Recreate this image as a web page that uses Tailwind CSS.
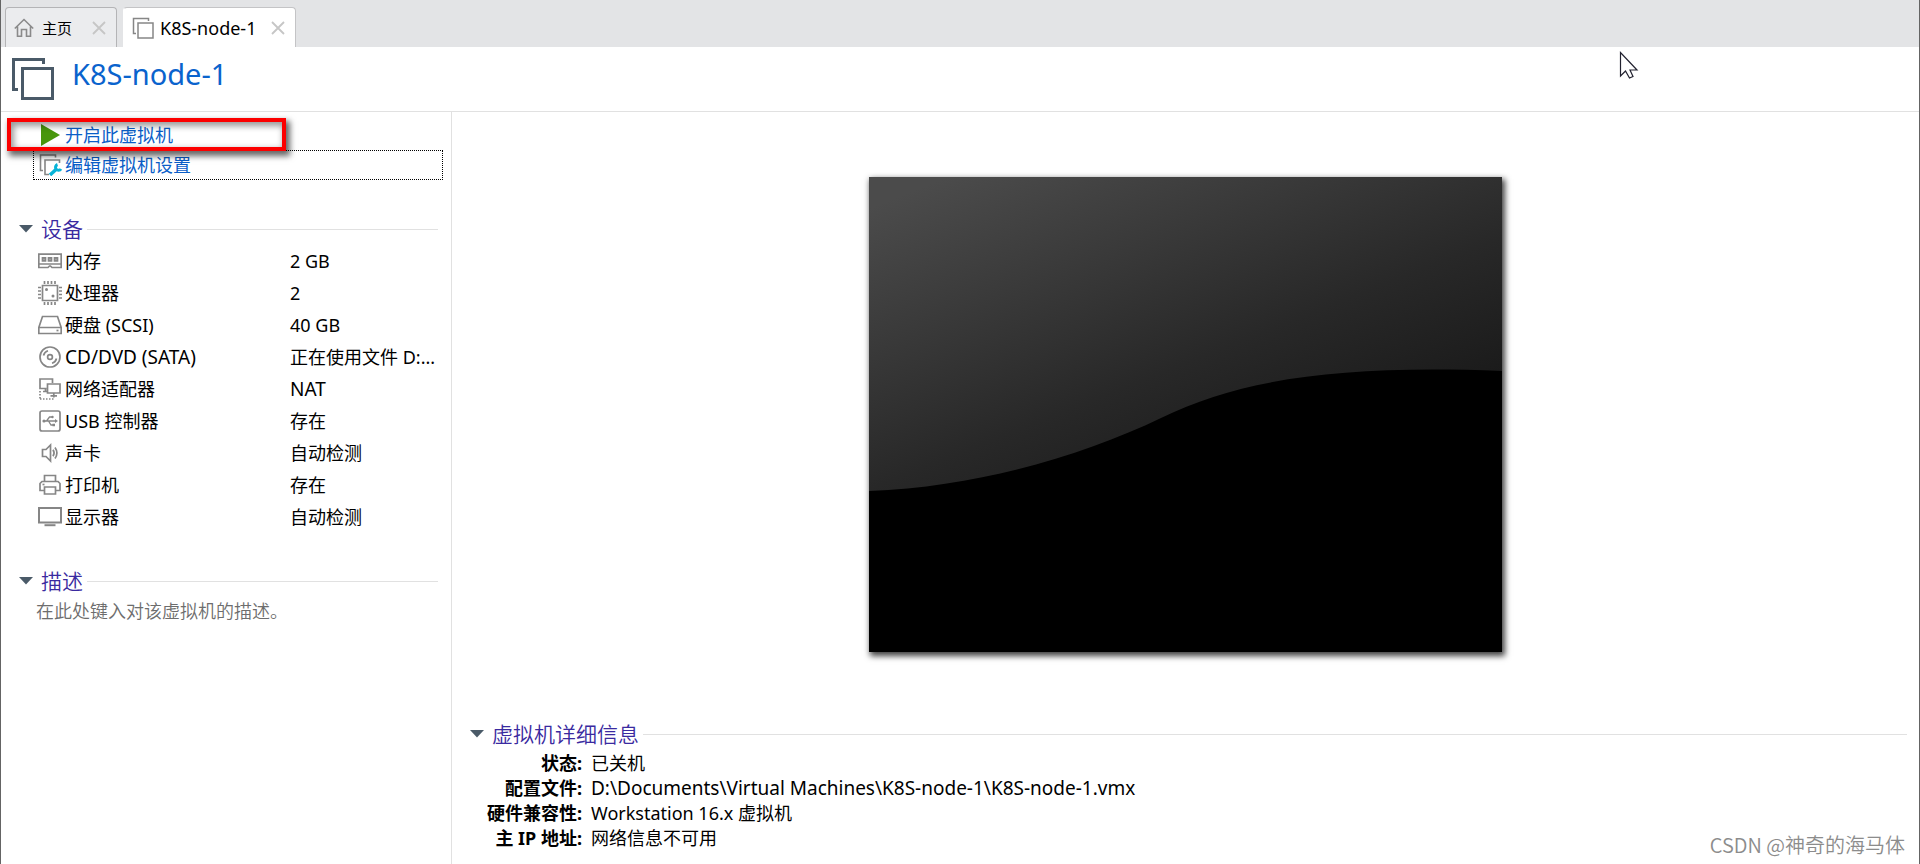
<!DOCTYPE html>
<html lang="zh-CN">
<head>
<meta charset="utf-8">
<title>K8S-node-1</title>
<script src="https://cdn.jsdelivr.net/npm/@tailwindcss/browser@4"></script>
</head>
<body class="font-['Noto_Sans','Noto_Sans_CJK_SC',sans-serif] text-lg leading-8 text-black bg-white">
<div class="relative flex flex-col min-h-screen border-x border-[#646464] bg-white">

  <!-- Tabs -->
  <nav class="flex items-end gap-1.5 h-[47px] pl-1 bg-[#e3e4e6] text-[15px] leading-5">
    <div class="flex items-center h-10 w-28 pl-2 pr-2.5 border border-b-0 border-[#b4b4b6] rounded-t bg-[#ebecee]">
      <button class="flex items-center gap-2">
        <svg class="size-5" viewBox="0 0 20 20" fill="none" stroke="#8a8a8a" stroke-width="1.600"><path d="M.8 10.500 10 1.500l9.200 9M3.500 8.500V18.200H7.500V11.500h5V18.200h4V8.500"/></svg>
        <span>主页</span>
      </button>
      <button class="ml-auto" aria-label="关闭主页"><svg class="size-3.5" viewBox="0 0 14 14" stroke="#c6c6c6" stroke-width="1.800"><path d="M1 1l12 12M13 1 1 13"/></svg></button>
    </div>
    <div class="flex items-center h-10 w-[173px] pl-2 pr-2.5 border border-b-0 border-l-white border-[#c4c4c6] rounded-t bg-white">
      <button class="flex items-center gap-1.5">
        <svg class="size-[22px]" viewBox="0 0 22 22" fill="none" stroke="#868686" stroke-width="1.500"><path d="M4 16.500H1.500V1.500H16.500V4M6 6h15v15H6z"/></svg>
        <span class="text-lg leading-5">K8S-node-1</span>
      </button>
      <button class="ml-auto" aria-label="关闭 K8S-node-1"><svg class="size-3.5" viewBox="0 0 14 14" stroke="#c6c6c6" stroke-width="1.800"><path d="M1 1l12 12M13 1 1 13"/></svg></button>
    </div>
  </nav>

  <!-- Title -->
  <header class="flex items-start gap-[18px] h-[65px] pt-[11px] pl-[11px] border-b border-[#e1e1e1]">
    <svg class="size-[42px]" viewBox="0 0 42 42" fill="none" stroke="#4a5a68" stroke-width="3"><path d="M6 31.500H1.500V1.500H31.500V6M10.500 10.500h30v30h-30z"/></svg>
    <h1 class="text-[29px] leading-8 text-[#0a63cd]">K8S-node-1</h1>
  </header>

  <div class="flex flex-1">
    <!-- Side panel -->
    <aside class="w-[451px] shrink-0 border-r border-[#e1e1e1] pr-2">
      <div class="relative flex flex-col pt-2 pl-8 text-[#0a5ec8]">
        <button class="flex items-center h-[30px] pl-2 gap-[5px]"><svg class="w-[19px] h-[22px]" viewBox="0 0 19 22"><path d="M0 0l19 11L0 22z" fill="#48960c"/></svg>开启此虚拟机</button>
        <button class="flex items-center h-[30px] pl-[5px] gap-0.5 border border-dotted border-black"><svg class="w-6 h-[22px]" viewBox="0 0 24 22" fill="none" stroke="#868686" stroke-width="1.600"><path d="M4 16.500H1.500V1H16.500V3.500M10 20.500H6V6H20.500V9"/><path d="M11 21l6.500-6" stroke="#06b4d8" stroke-width="3.500"/><path d="M18.500 10.500a3 3 0 1 0 3.500 4.500" stroke="#06b4d8" stroke-width="3"/></svg>编辑虚拟机设置</button>
        <!-- Highlight frame laid over the power-on entry -->
        <div class="absolute left-1.5 top-1.5 w-[279px] h-[33px] border-4 border-[#fc0000] pointer-events-none shadow-[3px_4px_6px_1px_rgba(0,0,0,.6),inset_2px_3px_6px_1px_rgba(0,0,0,.4)]"></div>
      </div>

      <section class="pt-[33px]">
        <h2><button class="flex items-center w-full h-8 pl-[18px] pr-[5px] text-[21px] font-[350] text-[#3a2aa0]"><svg class="w-3.5 h-2 mr-2" viewBox="0 0 14 8"><path d="M0 0h14L7 7.500z" fill="#4a5a68"/></svg>设备<span class="flex-1 h-px ml-1 bg-[#e1e1e1]"></span></button></h2>
        <table class="w-full table-fixed border-collapse">
          <colgroup><col class="w-16"><col class="w-[225px]"><col></colgroup>
          <tbody>
            <tr class="h-8"><td class="pl-[37px]"><svg class="size-6" viewBox="0 0 24 24" fill="none" stroke="#868686" stroke-width="1.700"><path d="M.8 5.200h22.400V18.500H14l-1.500-1.500h-1L10 18.500H.8zM.8 15H23"/><path d="M4.500 8.800h3v3h-3zM10.500 8.800h3v3h-3zM16.500 8.800h3v3h-3z" fill="#b0b0b0"/></svg></td><td>内存</td><td>2 GB</td></tr>
            <tr class="h-8"><td class="pl-[37px]"><svg class="size-6" viewBox="0 0 24 24" fill="none" stroke="#868686" stroke-width="1.700"><path d="M4.500 4.500h15v15h-15z"/><path d="M6.500 0v3M10 0v3M13.500 0v3M17 0v3M6.500 21v3M10 21v3M13.500 21v3M17 21v3M0 6.500h3M0 10h3M0 13.500h3M0 17h3M21 6.500h3M21 10h3M21 13.500h3M21 17h3"/><circle cx="8.500" cy="8.500" r="1.500" fill="#868686" stroke="none"/><circle cx="15" cy="15" r="1.500" fill="#868686" stroke="none"/></svg></td><td>处理器</td><td>2</td></tr>
            <tr class="h-8"><td class="pl-[37px]"><svg class="size-6" viewBox="0 0 24 24" fill="none" stroke="#868686" stroke-width="1.700"><path d="M.8 14.500 4.500 3.500h15l3.700 11v6H.8zM.8 14.500h22.400"/><path d="M18.500 17.500h2"/></svg></td><td>硬盘 (SCSI)</td><td>40 GB</td></tr>
            <tr class="h-8"><td class="pl-[37px]"><svg class="size-6" viewBox="0 0 24 24" fill="none" stroke="#868686" stroke-width="1.700"><circle cx="12" cy="12" r="10"/><circle cx="12" cy="12" r="2.400"/><path d="M5.500 10.500A6.500 6.500 0 0 1 10 5.800M18.500 13.500A6.500 6.500 0 0 1 14 18.200"/></svg></td><td class="text-[19px] leading-8">CD/DVD (SATA)</td><td class="truncate">正在使用文件 D:...</td></tr>
            <tr class="h-8"><td class="pl-[37px]"><svg class="size-6" viewBox="0 0 24 24" fill="none" stroke="#868686" stroke-width="1.700"><path d="M8.500 11.500H2V2h12.500v4M5 14.500h4.500M7.500 11.500v3M9.500 7h12.500v9H9.500zM15.800 16v3M12.500 18.800h6.500"/><path d="M2 14v8M2 22h14M15.800 19v3" stroke-dasharray="1.500 1.500"/></svg></td><td>网络适配器</td><td class="text-[19px] leading-8">NAT</td></tr>
            <tr class="h-8"><td class="pl-[37px]"><svg class="size-6" viewBox="0 0 24 24" fill="none" stroke="#868686" stroke-width="1.700"><rect x="2" y="2" width="20" height="20" rx="2"/><path d="M6 12h12M8.500 12l3-4H14M10.500 12l2.500 4h2.500" stroke-width="1.300"/><circle cx="6" cy="12" r="1.600" fill="#868686" stroke="none"/><circle cx="14.500" cy="8" r="1.200" fill="#868686" stroke="none"/><path d="M14.500 14.800h2.500v2.500h-2.500zM17 10l3 2-3 2z" fill="#868686" stroke="none"/></svg></td><td>USB 控制器</td><td>存在</td></tr>
            <tr class="h-8"><td class="pl-[37px]"><svg class="size-6" viewBox="0 0 24 24" fill="none" stroke="#868686" stroke-width="1.700"><path d="M4.500 8.500h3.500l4.500-4.500v16l-4.500-4.500H4.500z"/><path d="M15 8.800q2.200 3.200 0 6.400M17 6.500q3.800 5.500 0 11"/></svg></td><td>声卡</td><td>自动检测</td></tr>
            <tr class="h-8"><td class="pl-[37px]"><svg class="size-6" viewBox="0 0 24 24" fill="none" stroke="#868686" stroke-width="1.700"><path d="M6.500 8.500v-6h11v6M6.500 17.500H2v-7l2-2h16l2 2v7h-4.500M6.500 14h11v7h-11z"/><path d="M4.500 11.500h2"/></svg></td><td>打印机</td><td>存在</td></tr>
            <tr class="h-8"><td class="pl-[37px]"><svg class="size-6" viewBox="0 0 24 24" fill="none" stroke="#868686" stroke-width="2"><path d="M1 3h22v14.500H1z"/><path d="M6.500 20.200h11"/></svg></td><td>显示器</td><td>自动检测</td></tr>
          </tbody>
        </table>
      </section>

      <section class="pt-8">
        <h2><button class="flex items-center w-full h-8 pl-[18px] pr-[5px] text-[21px] font-[350] text-[#3a2aa0]"><svg class="w-3.5 h-2 mr-2" viewBox="0 0 14 8"><path d="M0 0h14L7 7.500z" fill="#4a5a68"/></svg>描述<span class="flex-1 h-px ml-1 bg-[#e1e1e1]"></span></button></h2>
        <p class="pl-[35px] leading-7 text-[#6d6d6d] font-[350]">在此处键入对该虚拟机的描述。</p>
      </section>
    </aside>

    <!-- Console preview and details -->
    <main class="flex flex-col flex-1 min-w-0">
      <div class="flex flex-1 items-center justify-center pb-0.5">
        <svg class="w-[633px] max-w-full shadow-[2px_3px_6px_1px_rgba(0,0,0,.75)]" viewBox="0 0 633 475" role="img" aria-label="虚拟机屏幕">
          <defs><linearGradient id="glass" gradientUnits="userSpaceOnUse" x1="0" y1="0" x2="153" y2="385"><stop offset=".07" stop-color="#4b4b4b"/><stop offset=".7" stop-color="#282828"/><stop offset="1" stop-color="#1b1b1b"/></linearGradient></defs>
          <path d="M0 0h633v475H0z"/>
          <path d="M0 0H633V194C480 188 375 200 292 241C215 278 110 310 0 314z" fill="url(#glass)"/>
        </svg>
      </div>
      <section class="pb-[13px] pl-[18px] pr-3">
        <h2><button class="flex items-center w-full h-8 text-[21px] font-[350] text-[#3a2aa0]"><svg class="w-3.5 h-2 mr-2" viewBox="0 0 14 8"><path d="M0 0h14L7 7.500z" fill="#4a5a68"/></svg>虚拟机详细信息<span class="flex-1 h-px ml-1 bg-[#e1e1e1]"></span></button></h2>
        <table class="mt-px leading-[25px] border-collapse">
          <tbody>
            <tr><th scope="row" class="w-28 text-right font-bold">状态:</th><td class="pl-[9px]">已关机</td></tr>
            <tr><th scope="row" class="w-28 text-right font-bold whitespace-nowrap">配置文件:</th><td class="pl-[9px] text-[19px] leading-[25px]">D:\Documents\Virtual Machines\K8S-node-1\K8S-node-1.vmx</td></tr>
            <tr><th scope="row" class="w-28 text-right font-bold whitespace-nowrap">硬件兼容性:</th><td class="pl-[9px]">Workstation 16.x 虚拟机</td></tr>
            <tr><th scope="row" class="w-28 text-right font-bold whitespace-nowrap">主 IP 地址:</th><td class="pl-[9px]">网络信息不可用</td></tr>
          </tbody>
        </table>
      </section>
    </main>
  </div>

  <!-- Pointer and watermark overlays -->
  <svg class="absolute left-[1618px] top-[51px] w-5 h-7" viewBox="0 0 20 28"><path d="M1.500 1.500V25l5-5 4 7 3.500-1.500-3-6.500H18z" fill="#fff" stroke="#222230" stroke-width="1.200"/></svg>
  <p class="absolute right-3.5 bottom-[3px] font-['Noto_Sans_CJK_SC',sans-serif] font-[350] text-xl leading-8 text-[#8c8c8c]">CSDN @神奇的海马体</p>
</div>
</body>
</html>
